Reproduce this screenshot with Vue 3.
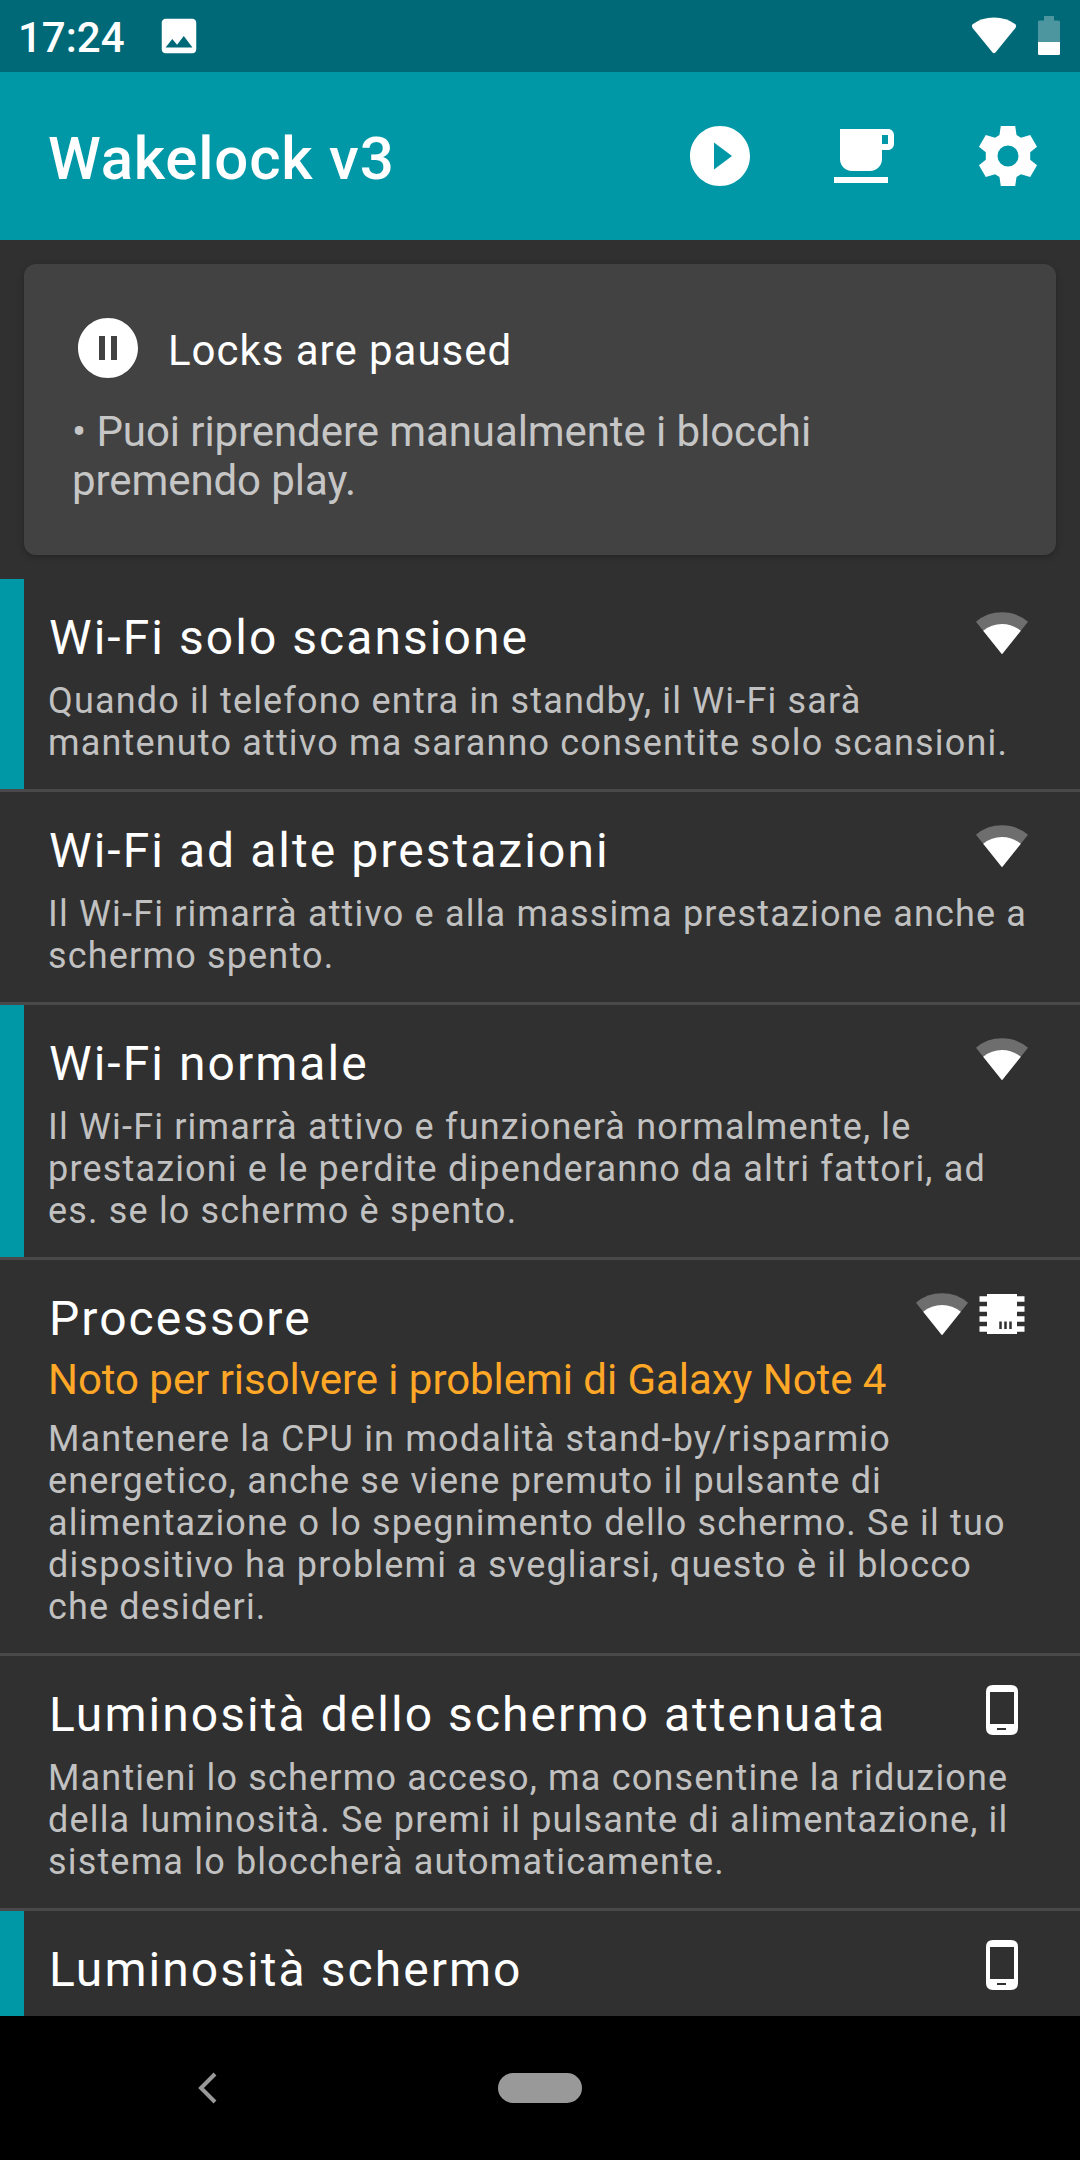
<template>
  <div class="screen">
    <header class="status-bar">
      <span class="clock">17:24</span>
      <svg class="status-photo" viewBox="0 0 24 24">
        <path fill="#fff" d="M21 19V5c0-1.1-.9-2-2-2H5c-1.1 0-2 .9-2 2v14c0 1.1.9 2 2 2h14c1.1 0 2-.9 2-2zM8.500 13.500l2.500 3.010L14.500 12l4.500 6H5l3.500-4.500z" />
      </svg>
      <svg class="status-wifi" viewBox="0 0 46 38">
        <path fill="#fff" d="M1 7.500Q10 .5 23 .5T45 7.500Q46.500 9 45.200 11L24.500 36.500Q23 38 21.500 36.500L.8 11Q-.5 9 1 7.500z" />
      </svg>
      <svg class="status-battery" viewBox="0 0 22 39">
        <path fill="#fff" fill-opacity=".3" d="M6 0h10v4.500h4.500Q22 4.500 22 6v20H0V6q0-1.500 1.500-1.500H6z" />
        <path fill="#fff" d="M0 26h22v11.500q0 1.500-1.500 1.500h-19Q0 39 0 37.500z" />
      </svg>
    </header>

    <div class="app-bar">
      <h1 class="app-title">Wakelock v3</h1>
      <div class="actions">
        <svg v-for="action in actions" :key="action.name" class="action-icon" viewBox="0 0 24 24">
          <path fill="#fff" :d="action.path" />
        </svg>
      </div>
    </div>

    <main class="content">
      <section class="card">
        <div class="card-head">
          <svg class="card-icon" viewBox="0 0 24 24">
            <path fill="#fff" d="M12 2C6.480 2 2 6.480 2 12s4.480 10 10 10 10-4.480 10-10S17.520 2 12 2zm-1 14H9V8h2v8zm4 0h-2V8h2v8z" />
          </svg>
          <span class="card-title">Locks are paused</span>
        </div>
        <p class="card-text">{{ pausedText }}</p>
      </section>

      <ul class="locks">
        <li v-for="lock in locks" :key="lock.title" class="lock" :class="{ active: lock.active }">
          <div class="lock-head">
            <h2 class="lock-title">{{ lock.title }}</h2>
            <div class="lock-icons">
              <template v-for="icon in lock.icons" :key="icon">
                <svg v-if="icon === 'wifi'" class="lock-icon" viewBox="0 0 60 60">
                  <path fill="#fff" fill-opacity=".3" d="M4 18.700Q15 9.300 30 9.300T56 18.700L30 51.200z" />
                  <path fill="#fff" d="M11.200 27.700Q19.500 21 30 21T48.800 27.700L30 51.200z" />
                </svg>
                <svg v-else-if="icon === 'cpu'" class="lock-icon" viewBox="0 0 60 60">
                  <path fill="#fff" d="M15 10h30v40H15z" />
                  <path stroke="#fff" stroke-width="5.500" d="M7.500 15H15M7.500 25H15M7.500 35H15M7.500 45H15M45 15h7.500M45 25h7.500M45 35h7.500M45 45h7.500" />
                  <path stroke="#303030" stroke-width="2.500" d="M28.500 37.500v7.500M33.500 37.500v7.500M38.500 37.500v7.500" />
                </svg>
                <svg v-else class="lock-icon" viewBox="0 0 60 60">
                  <path fill="#fff" fill-rule="evenodd" d="M21 5h18q7 0 7 7v36q0 7-7 7H21q-7 0-7-7V12q0-7 7-7zM18 12v32h24V12zM25 48v2h9v-2z" />
                </svg>
              </template>
            </div>
          </div>
          <p v-if="lock.note" class="lock-note">{{ lock.note }}</p>
          <p class="lock-text">{{ lock.text }}</p>
        </li>
      </ul>
    </main>

    <nav class="nav-bar">
      <svg class="nav-back" viewBox="0 0 20 32">
        <path fill="none" stroke="#999" stroke-width="4" d="M17 2L3 16l14 14" />
      </svg>
      <span class="nav-home"></span>
    </nav>
  </div>
</template>

<script setup>
const actions = [
  {
    name: 'play',
    path: 'M12 2C6.480 2 2 6.480 2 12s4.480 10 10 10 10-4.480 10-10S17.520 2 12 2zm-2 14.500v-9l6 4.500-6 4.500z'
  },
  {
    name: 'coffee',
    path: 'M20 3H4v10c0 2.210 1.790 4 4 4h6c2.210 0 4-1.790 4-4v-3h2c1.110 0 2-.9 2-2V5c0-1.110-.89-2-2-2zm0 5h-2V5h2v3zM2 21h18v-2H2v2z'
  },
  {
    name: 'settings',
    path: 'M9.600 2h4.800l.45 3 1.450.9 3.100-.9 2.270 3.900-2.270 1.850v2.500l2.270 1.850L19.400 19l-3.100-.9-1.450.9-.45 3H9.600l-.45-3-1.450-.9-3.100.9-2.270-3.900L4.600 13.250v-2.500L2.330 8.900 4.600 5l3.100.9 1.450-.9zM12 15.500a3.500 3.500 0 1 0 0-7 3.500 3.500 0 0 0 0 7z'
  }
]

const pausedText = '• Puoi riprendere manualmente i blocchi\npremendo play.'

const locks = [
  {
    title: 'Wi-Fi solo scansione',
    text: 'Quando il telefono entra in standby, il Wi-Fi sarà\nmantenuto attivo ma saranno consentite solo scansioni.',
    icons: ['wifi'],
    active: true
  },
  {
    title: 'Wi-Fi ad alte prestazioni',
    text: 'Il Wi-Fi rimarrà attivo e alla massima prestazione anche a\nschermo spento.',
    icons: ['wifi']
  },
  {
    title: 'Wi-Fi normale',
    text: 'Il Wi-Fi rimarrà attivo e funzionerà normalmente, le\nprestazioni e le perdite dipenderanno da altri fattori, ad\nes. se lo schermo è spento.',
    icons: ['wifi'],
    active: true
  },
  {
    title: 'Processore',
    note: 'Noto per risolvere i problemi di Galaxy Note 4',
    text: 'Mantenere la CPU in modalità stand-by/risparmio\nenergetico, anche se viene premuto il pulsante di\nalimentazione o lo spegnimento dello schermo. Se il tuo\ndispositivo ha problemi a svegliarsi, questo è il blocco\nche desideri.',
    icons: ['wifi', 'cpu']
  },
  {
    title: 'Luminosità dello schermo attenuata',
    text: 'Mantieni lo schermo acceso, ma consentine la riduzione\ndella luminosità. Se premi il pulsante di alimentazione, il\nsistema lo bloccherà automaticamente.',
    icons: ['phone']
  },
  {
    title: 'Luminosità schermo',
    icons: ['phone'],
    active: true
  }
]
</script>

<style>
body {
  background: #000;
}
</style>

<style scoped>
.screen {
  display: flex;
  flex-direction: column;
  width: 1080px;
  height: 2160px;
  overflow: hidden;
  background: #303030;
  color: #fff;
  font-family: Roboto, sans-serif;
}

h1,
h2,
p,
ul {
  margin: 0;
  padding: 0;
  font-weight: 400;
}

svg {
  display: block;
  flex: none;
}

/* Status bar */
.status-bar {
  display: flex;
  flex: none;
  box-sizing: border-box;
  height: 72px;
  padding: 0 20px 0 18px;
  background: #006978;
}

.clock {
  width: 138px;
  padding-top: 13px;
  font-size: 42px;
  font-weight: 500;
  line-height: 49px;
}

.status-photo {
  width: 46px;
  height: 46px;
  margin-top: 13px;
}

.status-wifi {
  width: 46px;
  height: 37px;
  margin: 17px 21px 0 auto;
}

.status-battery {
  width: 22px;
  height: 39px;
  margin-top: 16px;
}

/* App bar */
.app-bar {
  display: flex;
  flex: none;
  justify-content: space-between;
  align-items: center;
  box-sizing: border-box;
  height: 168px;
  padding: 0 36px 0 48px;
  background: #0097a7;
}

.app-title {
  padding-top: 5px;
  font-size: 60px;
  font-weight: 500;
  line-height: 70px;
  letter-spacing: 0.8px;
}

.actions {
  display: flex;
  gap: 72px;
}

.action-icon {
  width: 72px;
  height: 72px;
}

.content {
  flex: 1;
  min-height: 0;
  overflow: hidden;
}

/* Paused card */
.card {
  box-sizing: border-box;
  height: 291px;
  margin: 24px;
  padding: 48px;
  border-radius: 12px;
  background: #424242;
  box-shadow: 0 2px 6px rgba(0, 0, 0, 0.25);
}

.card-head {
  display: flex;
  height: 72px;
}

.card-icon {
  width: 72px;
  height: 72px;
}

.card-title {
  padding: 14px 0 0 24px;
  font-size: 42px;
  line-height: 49px;
  letter-spacing: 0.97px;
}

.card-text {
  margin-top: 23px;
  color: #c6c6c6;
  font-size: 42px;
  line-height: 49px;
  letter-spacing: -0.08px;
  white-space: pre;
}

/* Lock list */
.locks {
  list-style: none;
}

.lock {
  position: relative;
  padding: 30px 48px 25px;
  border-bottom: 3px solid #494949;
}

.lock.active::before {
  content: '';
  position: absolute;
  top: 0;
  bottom: 0;
  left: 0;
  width: 24px;
  background: #0097a7;
}

.lock-head {
  display: flex;
  justify-content: space-between;
  height: 57px;
}

.lock-title {
  padding-left: 1px;
  font-size: 48px;
  line-height: 57px;
  letter-spacing: 2.05px;
  white-space: nowrap;
}

.lock-icons {
  display: flex;
  margin-top: -6px;
}

.lock-icon {
  width: 60px;
  height: 60px;
}

.lock-note {
  margin-top: 8px;
  color: #ffa726;
  font-size: 42px;
  line-height: 49px;
  letter-spacing: -0.05px;
}

.lock-text {
  margin-top: 14px;
  color: #c1c1c1;
  font-size: 36px;
  line-height: 42px;
  letter-spacing: 1.17px;
  white-space: pre;
}

/* Navigation bar */
.nav-bar {
  display: grid;
  flex: none;
  grid-template-columns: 1fr auto 1fr;
  align-items: center;
  height: 144px;
  background: #000;
}

.nav-back {
  width: 20px;
  height: 32px;
  margin-left: 198px;
}

.nav-home {
  width: 84px;
  height: 30px;
  border-radius: 15px;
  background: #999;
}
</style>
